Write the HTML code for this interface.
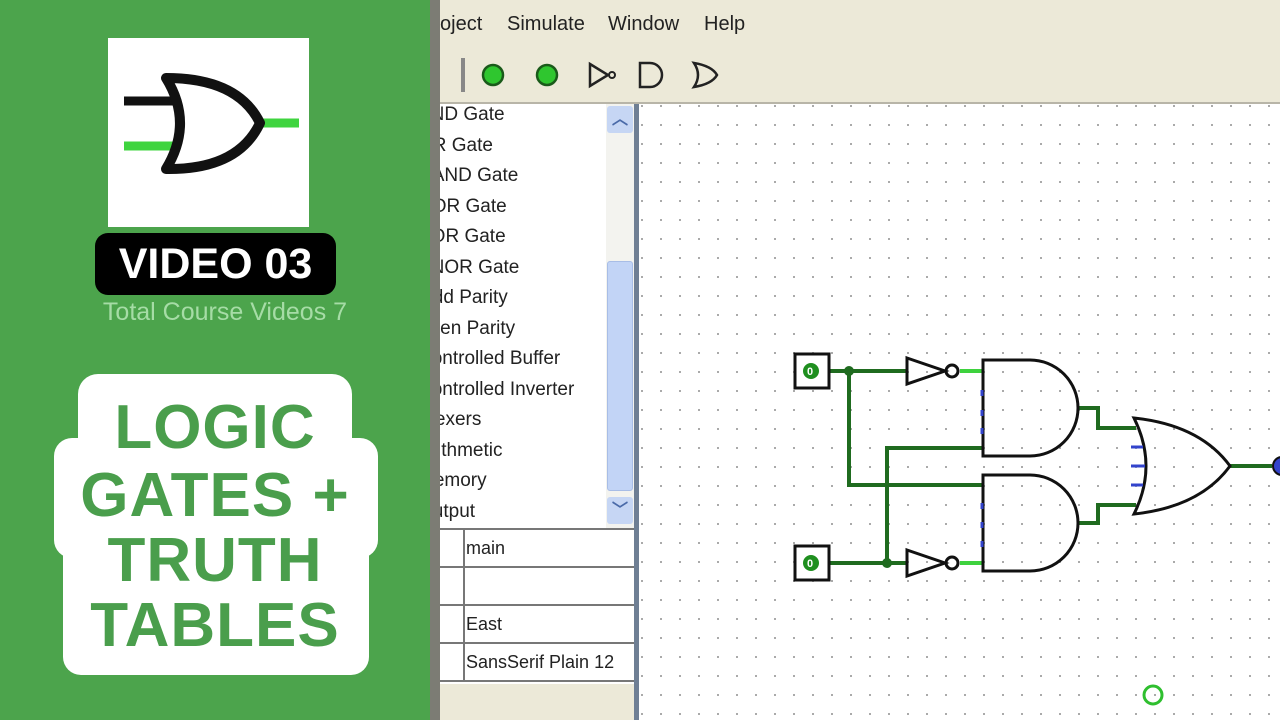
<!DOCTYPE html>
<html><head><meta charset="utf-8"><style>
*{margin:0;padding:0;box-sizing:border-box}
body{width:1280px;height:720px;overflow:hidden;position:relative;background:#fff;font-family:"Liberation Sans",sans-serif}
.abs{position:absolute}
.menu{left:0;top:0;width:1280px;height:44px;background:#ece9d8}
.menu span{position:absolute;top:13px;font-size:20px;color:#222}
.tool{left:0;top:44px;width:1280px;height:60px;background:#ece9d8;border-bottom:2px solid #b8b5a8}
.list{left:420px;top:104px;width:216px;height:424px;background:#fff}
.list div{position:absolute;left:-2px;font-size:19px;color:#222;white-space:nowrap}
.tbl{left:420px;top:528px;width:216px;height:158px;background:#fff}
.tbl .r{position:absolute;left:0;width:216px;border-top:2px solid #777}
.tbl span{position:absolute;left:46px;font-size:18px;color:#222}
.green{left:0;top:0;width:430px;height:720px;background:#4ca44c}
.t{position:absolute;width:430px;left:0;text-align:center;font-family:"Liberation Sans",sans-serif;font-weight:bold;color:#4a9e4c;font-size:62px;letter-spacing:1px}
</style></head><body>
<div class="abs" style="left:0;top:0;width:1280px;height:8px;background:#2a5fc8"></div>
<div class="abs menu">
<span style="left:420px">Project</span><span style="left:507px">Simulate</span><span style="left:608px">Window</span><span style="left:704px">Help</span>
</div>
<div class="abs tool"></div>
<svg class="abs" style="left:0;top:0" width="1280" height="720">
<rect x="461" y="58" width="4" height="34" fill="#888"/>
<circle cx="493" cy="75" r="10" fill="#2fc62f" stroke="#1a5a1a" stroke-width="2.5"/>
<circle cx="547" cy="75" r="10" fill="#2fc62f" stroke="#1a5a1a" stroke-width="2.5"/>
<path d="M590 64 L608 75 L590 86 Z" fill="none" stroke="#222" stroke-width="2.5"/>
<circle cx="612" cy="75" r="3" fill="none" stroke="#222" stroke-width="2"/>
<path d="M640 63 L650 63 A12 12 0 0 1 650 87 L640 87 Z" fill="none" stroke="#222" stroke-width="2.5"/>
<path d="M694 63 Q712 66 717 75 Q712 84 694 87 Q702 75 694 63 Z" fill="none" stroke="#222" stroke-width="2.5"/>
</svg>
<div class="abs list">
<div style="top:0">AND Gate</div><div style="top:31px">OR Gate</div><div style="top:61px">NAND Gate</div><div style="top:92px">NOR Gate</div><div style="top:122px">XOR Gate</div><div style="top:153px">XNOR Gate</div><div style="top:183px">Odd Parity</div><div style="top:214px">Even Parity</div><div style="top:244px">Controlled Buffer</div><div style="top:275px">Controlled Inverter</div><div style="top:305px">Plexers</div><div style="top:336px">Arithmetic</div><div style="top:366px">Memory</div><div style="top:397px">Output</div>
</div>
<div class="abs" style="left:606px;top:104px;width:28px;height:424px;background:#f3f3ef"></div>
<div class="abs" style="left:607px;top:106px;width:26px;height:27px;background:#c6d6f4;border-radius:3px;text-align:center;color:#4a6aa8;font-size:16px;line-height:27px;font-weight:bold">︿</div>
<div class="abs" style="left:607px;top:261px;width:26px;height:230px;background:#c2d4f6;border:1px solid #a8bde6;border-radius:3px"></div>
<div class="abs" style="left:607px;top:497px;width:26px;height:27px;background:#c6d6f4;border-radius:3px;text-align:center;color:#4a6aa8;font-size:16px;line-height:27px;font-weight:bold">﹀</div>
<div class="abs tbl">
<div class="r" style="top:0"></div><div class="r" style="top:38px"></div><div class="r" style="top:76px"></div><div class="r" style="top:114px"></div><div class="r" style="top:152px"></div>
<div class="abs" style="left:43px;top:0;width:2px;height:152px;background:#777"></div>
<span style="top:10px">main</span><span style="top:86px">East</span><span style="top:124px">SansSerif Plain 12</span>
</div>
<div class="abs" style="left:420px;top:684px;width:218px;height:36px;background:#ece9d8"></div>
<div class="abs" style="left:634px;top:104px;width:5px;height:616px;background:#6f7f94"></div>
<svg class="abs" style="left:639px;top:104px" width="641" height="616" viewBox="639 104 641 616">
<defs><pattern id="d" x="14" y="10" width="19" height="19" patternUnits="userSpaceOnUse"><rect x="0" y="0" width="2" height="2" fill="#aaa"/></pattern></defs>
<rect x="639" y="104" width="641" height="616" fill="#fff"/>
<rect x="639" y="104" width="641" height="616" fill="url(#d)"/>
<g fill="none" stroke="#1f6b1f" stroke-width="4">
<path d="M830 371 H907"/><path d="M849 371 V485 H983"/><path d="M830 563 H907"/><path d="M983 448 H887 V563"/>
<path d="M1078 408 H1098 V428 H1136"/><path d="M1078 523 H1098 V505 H1136"/><path d="M1230 466 H1272"/>
</g>
<g stroke="#3ed23e" stroke-width="4"><path d="M960 371 H983"/><path d="M960 563 H983"/></g>
<circle cx="849" cy="371" r="5" fill="#1f6b1f"/><circle cx="887" cy="563" r="5" fill="#1f6b1f"/>
<g fill="none" stroke="#111" stroke-width="3">
<rect x="795" y="354" width="34" height="34"/><rect x="795" y="546" width="34" height="34"/>
<path d="M907 358 L945 371 L907 384 Z"/><circle cx="952" cy="371" r="6"/>
<path d="M907 550 L945 563 L907 576 Z"/><circle cx="952" cy="563" r="6"/>
<path d="M983 360 H1030 A48 48 0 0 1 1030 456 H983 Z"/>
<path d="M983 475 H1030 A48 48 0 0 1 1030 571 H983 Z"/>
<path d="M1134 418 Q1200 425 1230 466 Q1200 507 1134 514 Q1158 466 1134 418 Z"/>
</g>
<g fill="#1f8f1f"><circle cx="811" cy="371" r="8"/><circle cx="811" cy="563" r="8"/></g>
<g fill="#fff" font-size="11" font-weight="bold" font-family="Liberation Sans"><text x="807" y="375">0</text><text x="807" y="567">0</text></g>
<g stroke="#3344cc" stroke-width="3"><path d="M982 390v6M982 410v6M982 428v6M982 503v6M982 522v6M982 541v6"/><path d="M1131 447h12M1131 466h14M1131 485h12"/></g>
<circle cx="1282" cy="466" r="9" fill="#3344cc" stroke="#111" stroke-width="2"/>
<circle cx="1153" cy="695" r="9" fill="none" stroke="#2fbf2f" stroke-width="3"/>
</svg>
<div class="abs green"></div>
<div class="abs" style="left:430px;top:0;width:10px;height:720px;background:#7c7c74"></div>
<svg class="abs" style="left:108px;top:38px" width="201" height="189">
<rect width="201" height="189" fill="#fff"/>
<path d="M16 108 H72" stroke="#3fd43f" stroke-width="9"/>
<path d="M152 85 H191" stroke="#3fd43f" stroke-width="9"/>
<path d="M16 63 H70" stroke="#111" stroke-width="9"/>
<path d="M58 40 Q130 40 152 85 Q130 132 58 131 Q86 85 58 40 Z" fill="none" stroke="#111" stroke-width="10" stroke-linejoin="round"/>
</svg>
<div class="abs" style="left:95px;top:233px;width:241px;height:62px;background:#000;border-radius:13px;color:#fff;font-family:'Liberation Sans',sans-serif;font-weight:bold;font-size:43px;text-align:center;line-height:62px">VIDEO 03</div>
<div class="abs" style="left:0;width:450px;top:298px;text-align:center;color:#a6dca6;font-family:'Liberation Sans',sans-serif;font-size:25px">Total Course Videos 7</div>
<div class="abs" style="left:78px;top:374px;width:274px;height:90px;background:#fff;border-radius:20px"></div>
<div class="abs" style="left:54px;top:438px;width:324px;height:120px;background:#fff;border-radius:18px"></div>
<div class="abs" style="left:63px;top:500px;width:306px;height:175px;background:#fff;border-radius:18px"></div>
<div class="t" style="top:392px">LOGIC</div>
<div class="t" style="top:460px">GATES +</div>
<div class="t" style="top:525px">TRUTH</div>
<div class="t" style="top:590px">TABLES</div>
</body></html>
